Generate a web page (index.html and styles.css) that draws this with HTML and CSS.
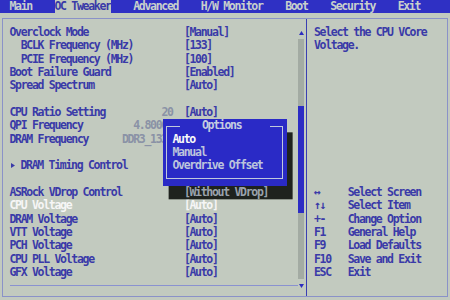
FILE: index.html
```html
<!DOCTYPE html>
<html lang="en">
<head>
<meta charset="utf-8">
<title>OC Tweaker</title>
<link rel="stylesheet" href="styles.css">
</head>
<body>
<nav class="tabs">
  <span class="tab">Main</span>
  <span class="tab active">OC Tweaker</span>
  <span class="tab">Advanced</span>
  <span class="tab">H/W Monitor</span>
  <span class="tab">Boot</span>
  <span class="tab">Security</span>
  <span class="tab">Exit</span>
</nav>
<main class="frame">
  <section class="left">
    <div class="list">
      <div class="row"><span class="label">Overclock Mode</span><span class="val">[Manual]</span></div>
      <div class="row"><span class="label ind">BCLK Frequency (MHz)</span><span class="val">[133]</span></div>
      <div class="row"><span class="label ind">PCIE Frequency (MHz)</span><span class="val">[100]</span></div>
      <div class="row"><span class="label">Boot Failure Guard</span><span class="val">[Enabled]</span></div>
      <div class="row"><span class="label">Spread Spectrum</span><span class="val">[Auto]</span></div>
      <div class="row"></div>
      <div class="row"><span class="label">CPU Ratio Setting</span><span class="dim">20</span><span class="val">[Auto]</span></div>
      <div class="row"><span class="label">QPI Frequency</span><span class="dim">4.800GT</span></div>
      <div class="row"><span class="label">DRAM Frequency</span><span class="dim">DDR3_1333</span></div>
      <div class="row"></div>
      <div class="row"><span class="label"><svg class="tri" width="11" height="13" viewBox="0 0 11 13"><polygon points="1,4 5,6.5 1,9" fill="currentColor"/></svg>DRAM Timing Control</span></div>
      <div class="row"></div>
      <div class="row"><span class="label">ASRock VDrop Control</span><span class="val shaded">[Without VDrop]</span></div>
      <div class="row sel"><span class="label">CPU Voltage</span><span class="val">[Auto]</span></div>
      <div class="row"><span class="label">DRAM Voltage</span><span class="val">[Auto]</span></div>
      <div class="row"><span class="label">VTT Voltage</span><span class="val">[Auto]</span></div>
      <div class="row"><span class="label">PCH Voltage</span><span class="val">[Auto]</span></div>
      <div class="row"><span class="label">CPU PLL Voltage</span><span class="val">[Auto]</span></div>
      <div class="row"><span class="label">GFX Voltage</span><span class="val">[Auto]</span></div>
      <div class="sep"><div class="rule"></div></div>
    </div>
    <div class="scroll">
      <div class="arrow"><svg width="5" height="4" viewBox="0 0 5 4"><polygon points="0,4 2.5,0 5,4" fill="currentColor"/></svg></div>
      <div class="track"><div class="thumb"></div></div>
      <div class="arrow"><svg width="5" height="4" viewBox="0 0 5 4"><polygon points="0,0 5,0 2.5,4" fill="currentColor"/></svg></div>
    </div>
    <div class="popup">
      <div class="pbox">
        <div class="ptitle">Options</div>
        <div class="item on">Auto</div>
        <div class="item">Manual</div>
        <div class="item">Overdrive Offset</div>
      </div>
    </div>
  </section>
  <aside class="right">
    <div class="help">
      <div class="line">Select the CPU VCore</div>
      <div class="line">Voltage.</div>
    </div>
    <div class="keys">
      <div class="key"><span class="k">↔</span><span>Select Screen</span></div>
      <div class="key"><span class="k">↑↓</span><span>Select Item</span></div>
      <div class="key"><span class="k">+-</span><span>Change Option</span></div>
      <div class="key"><span class="k">F1</span><span>General Help</span></div>
      <div class="key"><span class="k">F9</span><span>Load Defaults</span></div>
      <div class="key"><span class="k">F10</span><span>Save and Exit</span></div>
      <div class="key"><span class="k">ESC</span><span>Exit</span></div>
    </div>
  </aside>
</main>
</body>
</html>
```
FILE: styles.css
```css
:root {
  --c: 5.625px;
  --r: 13.333px;
  --bg: #c2cabf;
  --ink: #3a3aa8;
  --bar: #2f30c4;
  --pop: #2a2ac6;
}
* { box-sizing: border-box; margin: 0; padding: 0; }
html, body { width: 450px; height: 300px; overflow: hidden; }
body {
  background: var(--bg);
  color: var(--ink);
  font-family: "DejaVu Sans Mono", "Liberation Mono", monospace;
  font-weight: bold;
  font-size: 11.5px;
  line-height: var(--r);
  letter-spacing: -1.3px;
}
.tabs {
  display: flex;
  height: 13px;
  line-height: 13px;
  background: var(--bar);
  color: #c8d0cc;
  padding-left: 9.5px;
}
.tab { white-space: pre; margin-right: calc(var(--c) * 4); }
.tab.active { background: var(--bg); color: var(--ink); }

.frame {
  display: flex;
  width: 446px;
  margin: 5px 0 0 2px;
  border: 1px solid #8a92c8;
}
.left {
  position: relative;
  display: flex;
  width: 304px;
  padding: 7px 2px 3.33px 6.5px;
  border-right: 1px solid #3a3eb2;
}
.list { flex: 1; }
.row {
  display: grid;
  grid-template-columns: calc(var(--c) * 20) calc(var(--c) * 9) calc(var(--c) * 2) 1fr;
  height: var(--r);
  white-space: pre;
}
.label { grid-column: 1; }
.ind { padding-left: calc(var(--c) * 2); }
.dim { grid-column: 2; text-align: right; color: #8a92a6; }
.val { grid-column: 4; }
.sel { color: #f6f6f6; }
.shaded { position: relative; z-index: 2; color: #9aa2ac; }
.tri { vertical-align: top; }
.sep { height: var(--r); padding-top: 6px; padding-left: 0.5px; }
.rule { height: 1px; background: #8a92d0; }

.scroll { width: 6px; display: flex; flex-direction: column; color: #2c2cc0; }
.arrow { height: var(--r); display: flex; align-items: center; justify-content: center; }
.track { height: calc(var(--r) * 18); background: #a3aba3; padding-top: calc(var(--r) * 5); }
.thumb { height: calc(var(--r) * 8); background: #2c2cc4; }

.popup {
  position: absolute;
  left: 159.7px;
  top: 100.33px;
  width: 124px;
  height: calc(var(--r) * 5);
  padding: 6.67px 3.3px;
  background: var(--pop);
  box-shadow: 5.63px 13.33px 0 #1e221e;
  z-index: 1;
  color: #bcc4dc;
}
.pbox {
  position: relative;
  height: 100%;
  border: 1px solid #c0c8dc;
  padding: 5.7px 0 0 5.5px;
}
.ptitle {
  position: absolute;
  top: -7.67px;
  left: 13px;
  right: 12.4px;
  padding-left: 22px;
  background: var(--pop);
  color: #c4cce0;
  white-space: pre;
}
.item { height: var(--r); white-space: pre; }
.item.on { color: #f8f8f8; }

.right { flex: 1; padding: 7px 0 0 7px; }
.line { height: var(--r); white-space: pre; }
.keys { margin-top: calc(var(--r) * 10); }
.key {
  display: grid;
  grid-template-columns: calc(var(--c) * 6) 1fr;
  height: var(--r);
  white-space: pre;
}
```
